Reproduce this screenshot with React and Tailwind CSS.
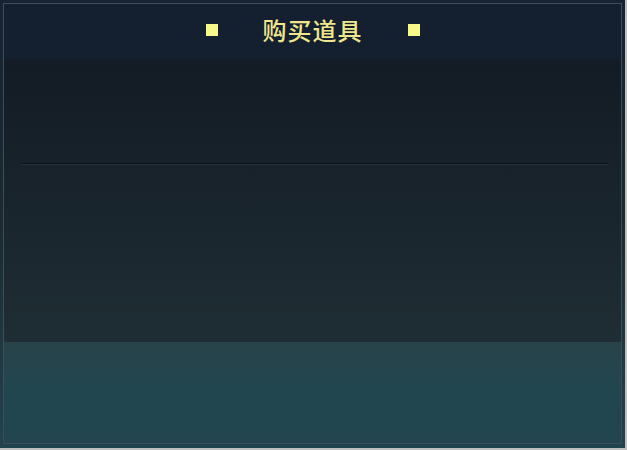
export default function App() {
  return (
    <div className="min-h-screen bg-[#bfbfbf]">
      <div className="w-[625px] h-[448px] p-[3px] pb-[4px] bg-gradient-to-b from-[#172233] via-[#1b2a31] to-[#20444d]">
        <div className="h-full flex flex-col border border-[#3d4e5a]">
          {/* Header */}
          <header className="h-[55px] shrink-0 bg-[#141f30] flex items-center justify-center gap-[45px] pb-[4px]">
            <span className="w-3 h-3 bg-[#f7f78a]" />
            <h1
              className="text-[24px] font-medium text-[#f0e68c] tracking-[1px] leading-none"
              style={{ fontFamily: '"Noto Sans CJK SC", "Noto Sans", sans-serif' }}
            >
              购买道具
            </h1>
            <span className="w-3 h-3 bg-[#f7f78a]" />
          </header>

          {/* Item list */}
          <main className="h-[283px] shrink-0 bg-gradient-to-b from-[#131b24] to-[#1f2e34] pt-[104px] pl-[17px] pr-[13px]">
            <div className="h-px bg-[#08121b] shadow-[0_1px_0_#26363c]" />
          </main>

          {/* Footer */}
          <footer className="flex-1 bg-gradient-to-b from-[#28434a] via-[#21464f] to-[#22454f]" />
        </div>
      </div>
    </div>
  );
}
